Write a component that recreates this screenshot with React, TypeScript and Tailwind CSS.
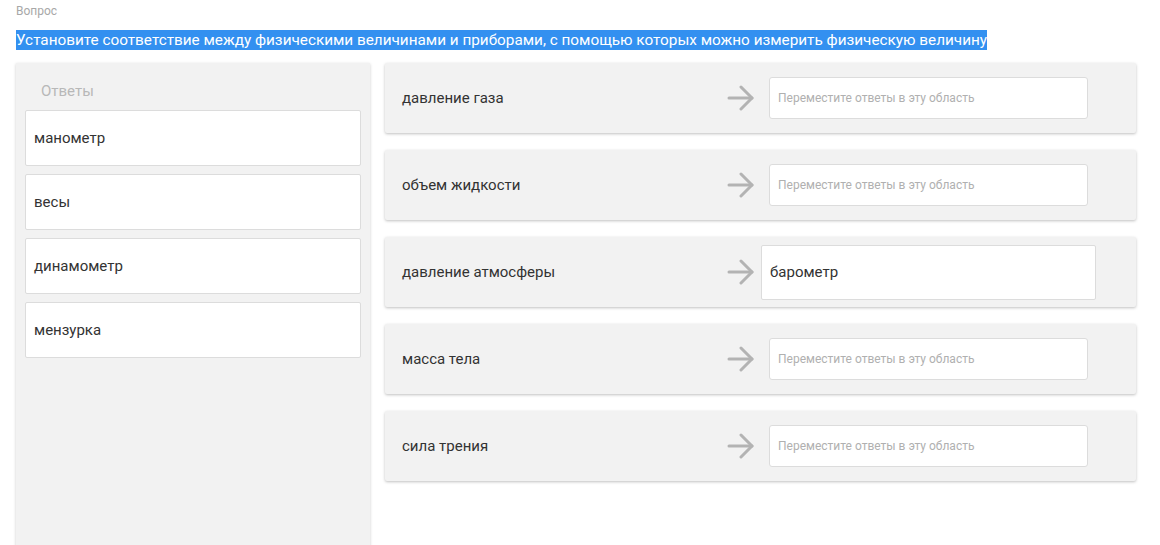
const answers = ["манометр", "весы", "динамометр", "мензурка"];

const rows: { label: string; value?: string }[] = [
  { label: "давление газа" },
  { label: "объем жидкости" },
  { label: "давление атмосферы", value: "барометр" },
  { label: "масса тела" },
  { label: "сила трения" },
];

function Arrow() {
  return (
    <svg width="28" height="26" viewBox="0 0 28 26" fill="none" stroke="#b3b3b3" strokeWidth="3" strokeLinecap="round" strokeLinejoin="round">
      <path d="M2 13h23" />
      <path d="M14 2l11 11-11 11" />
    </svg>
  );
}

export default function App() {
  return (
    <div className="w-[1160px] h-[545px] overflow-hidden bg-white font-['Roboto',sans-serif] text-[#333]">
      <div className="pl-4 pt-[4px] text-[12px] leading-[14px] text-[#a8a8a8]">Вопрос</div>
      <div className="pl-4 mt-[10px]">
        <span className="bg-[#3390f0] text-white text-[15.3px] leading-[20px] py-[1px]">
          Установите соответствие между физическими величинами и приборами, с помощью которых можно измерить физическую величину
        </span>
      </div>
      <div className="flex gap-[15px] pl-4 pt-[11px]">
        {/* левая колонка ответов */}
        <div className="w-[354px] h-[500px] bg-[#f2f2f2] shadow-[0_1px_3px_rgba(0,0,0,0.2)] px-[9px]">
          <div className="h-[47px] pl-4 pt-[19px] text-[15px] leading-[18px] text-[#b8b8b8]">Ответы</div>
          <div className="flex flex-col gap-2">
            {answers.map((a) => (
              <div key={a} className="h-[56px] flex items-center px-2 bg-white border border-[#dcdcdc] rounded-[2px] text-[15px]">
                {a}
              </div>
            ))}
          </div>
        </div>
        {/* правая колонка */}
        <div className="w-[751px] flex flex-col gap-[17px]">
          {rows.map((r) => (
            <div key={r.label} className="h-[70px] flex items-center bg-[#f2f2f2] shadow-[0_1px_3px_rgba(0,0,0,0.25)] pl-[17px] pr-[48px] rounded-[2px]">
              <div className="text-[15px]">{r.label}</div>
              <div className="ml-auto flex items-center gap-[14px]">
                <Arrow />
                <div className="w-[319px] flex">
                  {r.value ? (
                    <div className="-mx-2 w-[335px] h-[55px] flex items-center px-2 bg-white border border-[#dcdcdc] rounded-[2px] text-[15px]">
                      {r.value}
                    </div>
                  ) : (
                    <div className="w-full h-[42px] flex items-center px-2 bg-white border border-[#dcdcdc] rounded-[3px] text-[12px] text-[#b0b0b0]">
                      Переместите ответы в эту область
                    </div>
                  )}
                </div>
              </div>
            </div>
          ))}
        </div>
      </div>
    </div>
  );
}
